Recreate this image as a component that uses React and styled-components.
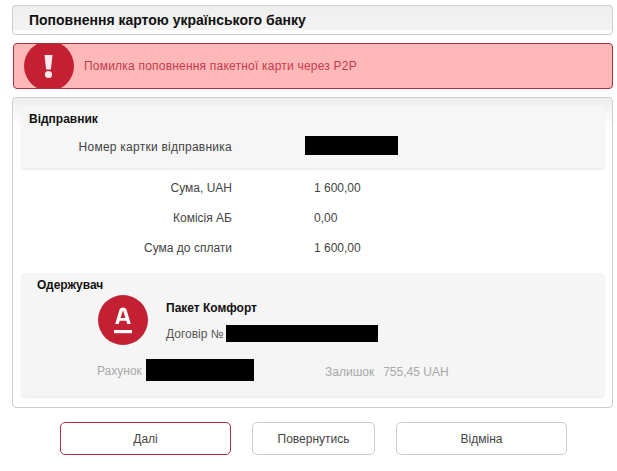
import styled, { createGlobalStyle } from "styled-components";

const GlobalStyle = createGlobalStyle`
  html, body {
    margin: 0;
    padding: 0;
    background: #fff;
    font-family: "Liberation Sans", Arial, sans-serif;
    font-size: 12px;
    color: #333;
  }
`;

const summary = [
  { label: "Сума, UAH", value: "1 600,00" },
  { label: "Комісія АБ", value: "0,00" },
  { label: "Сума до сплати", value: "1 600,00" },
];

const App = () => {
  return (
    <Page>
      <GlobalStyle />
      <Header>
        <Title>Поповнення картою українського банку</Title>
      </Header>
      <Alert>
        <AlertBadge>
          <svg width="50" height="46" viewBox="0 0 50 46">
            <path d="M20.5 12h8l-1.6 14.5h-4.8z" fill="#fff" opacity="0.9" />
            <circle cx="24.5" cy="31.5" r="3.6" fill="#fff" opacity="0.9" />
          </svg>
        </AlertBadge>
        <AlertText>Помилка поповнення пакетної карти через P2P</AlertText>
      </Alert>
      <Panel>
        <Sender>
          <BlockTitle>Відправник</BlockTitle>
          <Row>
            <Label $wide>Номер картки відправника</Label>
            <Redacted $w={93} $h={19} />
          </Row>
        </Sender>
        <Summary>
          {summary.map((item) => (
            <SummaryRow key={item.label}>
              <Label>{item.label}</Label>
              <Value>{item.value}</Value>
            </SummaryRow>
          ))}
        </Summary>
        <Recipient>
          <RecipientTitle>Одержувач</RecipientTitle>
          <Product>
            <Logo>
              <svg width="50" height="50" viewBox="0 0 50 50">
                <circle cx="25" cy="25" r="25" fill="#c42033" />
                <path
                  d="M25 12.5c-2 0-3 1-3.6 2.6L17.2 29h3.5l1-3.3h6.6l1 3.3h3.5l-4.2-13.9c-.6-1.6-1.6-2.6-3.6-2.6zm-2.4 10.4 2.3-7.4h.2l2.3 7.4z"
                  fill="#fff"
                />
                <rect x="16" y="35" width="18" height="3.2" fill="#fff" />
              </svg>
            </Logo>
            <ProductInfo>
              <ProductName>Пакет Комфорт</ProductName>
              <Contract>
                Договір №
                <Redacted $w={152} $h={17} />
              </Contract>
            </ProductInfo>
          </Product>
          <AccountRow>
            <Account>
              <MutedText>Рахунок</MutedText>
              <Redacted $w={108} $h={22} />
            </Account>
            <Balance>
              <MutedText>Залишок</MutedText>
              <MutedText>755,45 UAH</MutedText>
            </Balance>
          </AccountRow>
        </Recipient>
      </Panel>
      <Buttons>
        <Button $primary>Далі</Button>
        <Button $width={123}>Повернутись</Button>
        <Button>Відміна</Button>
      </Buttons>
    </Page>
  );
};

const Page = styled.div`
  width: 617px;
  height: 471px;
  box-sizing: border-box;
  padding: 5px 4px 0 12px;
  overflow: hidden;
`;

const Header = styled.div`
  height: 30px;
  box-sizing: border-box;
  display: flex;
  align-items: center;
  padding: 0 0 1px 16px;
  border: 1px solid #ccc;
  border-radius: 4px;
  background: linear-gradient(#eee, #f3f3f3 85%, #fff 88%);
`;

const Title = styled.div`
  font-size: 14px;
  font-weight: 700;
  color: #111;
`;

const Alert = styled.div`
  height: 46px;
  box-sizing: border-box;
  margin: 8px 0 8px 1px;
  display: flex;
  align-items: center;
  border: 1px solid #a8323f;
  border-radius: 4px;
  background: #ffb8b8;
  overflow: hidden;
`;

const AlertBadge = styled.div`
  flex: none;
  width: 50px;
  height: 50px;
  margin: -2px 0 -2px 10px;
  border-radius: 50%;
  background: #c42033;
  display: flex;
  align-items: center;
  justify-content: center;
`;

const AlertText = styled.div`
  margin-left: 10px;
  font-size: 12px;
  letter-spacing: 0.21px;
  color: #c43a4d;
`;

const Panel = styled.div`
  height: 311px;
  box-sizing: border-box;
  padding: 8px 7px 0 8px;
  border: 1px solid #ccc;
  border-radius: 4px;
  background: linear-gradient(#eee, #fff 30px);
`;

const Sender = styled.div`
  height: 62px;
  box-sizing: border-box;
  padding: 6px 0 0 8px;
  border-radius: 4px;
  background: #f6f6f6;
  box-shadow: 0 2px 2px #eee;
`;

const BlockTitle = styled.div`
  font-size: 12px;
  font-weight: 700;
  line-height: 14px;
  color: #111;
`;

const Row = styled.div`
  display: flex;
  align-items: center;
  margin-top: 10px;
`;

const Label = styled.div`
  width: 203px;
  text-align: right;
  flex: none;
  margin-right: 73px;
  color: #444;
  letter-spacing: ${(p) => (p.$wide ? "0.25px" : "normal")};
  padding-top: ${(p) => (p.$wide ? "2px" : "0")};
`;

const Redacted = styled.span`
  display: inline-block;
  flex: none;
  width: ${(p) => p.$w}px;
  height: ${(p) => p.$h}px;
  background: #000;
`;

const Summary = styled.div`
  display: flex;
  flex-direction: column;
  gap: 16px;
  padding: 13px 0 0 8px;
  height: 92px;
  box-sizing: border-box;
  margin-bottom: 13px;
`;

const SummaryRow = styled.div`
  display: flex;
  align-items: center;
  height: 14px;
`;

const Value = styled.div`
  margin-left: 9px;
  color: #444;
`;

const Recipient = styled.div`
  height: 123px;
  box-sizing: border-box;
  padding: 5px 0 0 16px;
  border-radius: 4px;
  background: #f5f5f5;
  box-shadow: 0 2px 2px #eee;
`;

const RecipientTitle = styled(BlockTitle)``;

const Product = styled.div`
  display: flex;
  margin: 3px 0 0 61px;
`;

const Logo = styled.div`
  flex: none;
  width: 50px;
  height: 50px;
  margin-right: 18px;
`;

const ProductInfo = styled.div`
  display: flex;
  flex-direction: column;
  padding-top: 6px;
`;

const ProductName = styled.div`
  font-weight: 700;
  color: #111;
  line-height: 14px;
`;

const Contract = styled.div`
  display: flex;
  align-items: center;
  gap: 2px;
  margin-top: 10px;
  color: #555;
`;

const AccountRow = styled.div`
  display: flex;
  align-items: center;
  margin: 14px 0 0 60px;
`;

const Account = styled.div`
  display: flex;
  align-items: center;
  gap: 4px;
  width: 228px;
  flex: none;
`;

const Balance = styled.div`
  display: flex;
  gap: 9px;
  padding-top: 2px;
`;

const MutedText = styled.span`
  padding-top: 2px;
  color: #a8a8a8;
`;

const Buttons = styled.div`
  display: flex;
  gap: 21px;
  margin: 14px 0 0 48px;
`;

const Button = styled.button`
  width: ${(p) => p.$width || 171}px;
  height: 33px;
  padding: 0;
  background: #fff;
  border: 1px solid ${(p) => (p.$primary ? "#a8323f" : "#ccc")};
  border-radius: 5px;
  font-family: inherit;
  font-size: 12px;
  color: #444;
`;

export default App;
